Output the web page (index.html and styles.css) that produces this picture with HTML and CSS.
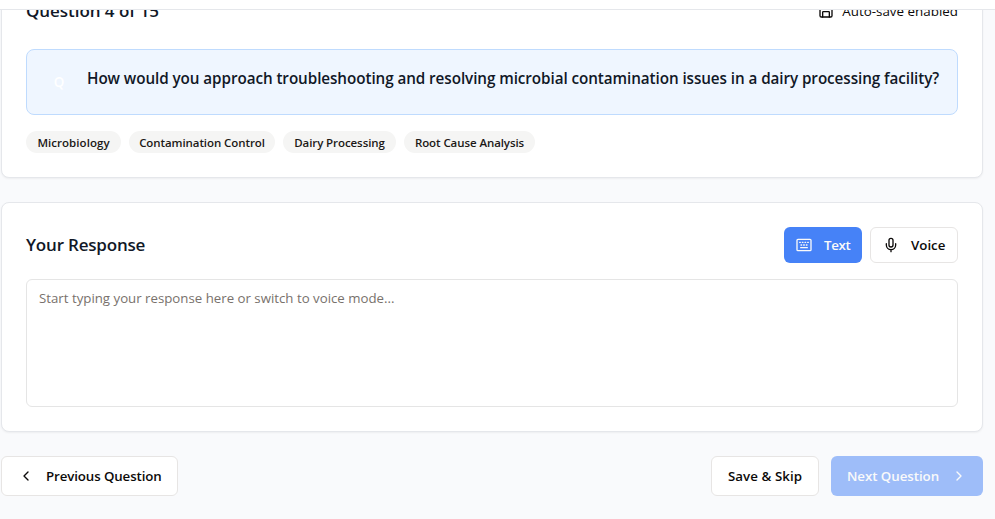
FILE: index.html
```html
<!DOCTYPE html>
<html lang="en">
<head>
<meta charset="utf-8">
<title>Interview Question</title>
<link rel="stylesheet" href="styles.css">
</head>
<body>
<header class="topbar"></header>
<main class="page">
  <section class="card">
    <div class="card-head question-head">
      <h2 class="title title-count">Question 4 of 15</h2>
      <div class="autosave">
        <svg class="icon" viewBox="0 0 24 24"><path d="M15.2 3a2 2 0 0 1 1.4.6l3.8 3.8a2 2 0 0 1 .6 1.4V19a2 2 0 0 1-2 2H5a2 2 0 0 1-2-2V5a2 2 0 0 1 2-2z"/><path d="M17 21v-7a1 1 0 0 0-1-1H8a1 1 0 0 0-1 1v7M7 3v4a1 1 0 0 0 1 1h7"/></svg>
        <span>Auto-save enabled</span>
      </div>
    </div>
    <div class="question">
      <span class="question-mark">Q</span>
      <p class="question-text">How would you approach troubleshooting and resolving microbial contamination issues in a dairy processing facility?</p>
    </div>
    <div class="tags">
      <span class="tag tag-micro">Microbiology</span>
      <span class="tag tag-control">Contamination Control</span>
      <span class="tag tag-dairy">Dairy Processing</span>
      <span class="tag tag-root">Root Cause Analysis</span>
    </div>
  </section>

  <section class="card">
    <div class="card-head response-head">
      <h2 class="title">Your Response</h2>
      <div class="modes">
        <button class="btn btn-small btn-primary btn-text">
          <svg class="icon" viewBox="0 0 24 24"><rect x="1.5" y="3.5" width="21" height="17" rx="1.5"/><path d="M5.5 8h1M9.5 8h1M13.5 8h1M17.5 8h1M7.5 12h1M11.5 12h1M15.5 12h1M7 16h10"/></svg>
          <span>Text</span>
        </button>
        <button class="btn btn-small btn-voice">
          <svg class="icon" viewBox="0 0 24 24"><path d="M12 2a3 3 0 0 0-3 3v7a3 3 0 0 0 6 0V5a3 3 0 0 0-3-3Z"/><path d="M19 10v2a7 7 0 0 1-14 0v-2M12 19v3"/></svg>
          <span>Voice</span>
        </button>
      </div>
    </div>
    <textarea class="answer" placeholder="Start typing your response here or switch to voice mode..."></textarea>
  </section>

  <nav class="actions">
    <button class="btn btn-prev">
      <svg class="icon" viewBox="0 0 24 24"><path d="m15 18-6-6 6-6"/></svg>
      <span>Previous Question</span>
    </button>
    <div class="actions-end">
      <button class="btn btn-skip"><span>Save &amp; Skip</span></button>
      <button class="btn btn-primary btn-next" disabled>
        <span>Next Question</span>
        <svg class="icon" viewBox="0 0 24 24"><path d="m9 18 6-6-6-6"/></svg>
      </button>
    </div>
  </nav>
</main>
</body>
</html>
```
FILE: styles.css
```css
* { box-sizing: border-box; }

body {
  margin: 0;
  height: 519px;
  overflow: hidden;
  background: #f9fafc;
  color: #0c0a09;
  font-family: "Open Sans", "Noto Sans", sans-serif;
  font-size: 13.4px;
  line-height: 20px;
}

.topbar {
  position: relative;
  z-index: 1;
  height: 10px;
  background: #fff;
  border-bottom: 1px solid #e5e7eb;
}

.page {
  width: 982px;
  margin: -38px 0 0 1px;
  display: flex;
  flex-direction: column;
  gap: 24px;
}

.card {
  padding: 24px;
  background: #fff;
  border: 1px solid #e5e7eb;
  border-radius: 8px;
  box-shadow: 0 1px 2px rgba(0, 0, 0, 0.05);
}

.card-head {
  display: flex;
  align-items: center;
  justify-content: space-between;
}

.question-head { height: 28px; margin-bottom: 24px; }
.response-head { height: 36px; margin-bottom: 16px; }

.title {
  margin: 0;
  color: #111827;
  font-size: 17px;
  font-weight: 600;
  letter-spacing: -0.2px;
  line-height: 28px;
}

.title-count { letter-spacing: -0.05px; }

.autosave { display: flex; align-items: center; gap: 8px; }

.icon {
  flex: none;
  width: 16px;
  height: 16px;
  fill: none;
  stroke: currentColor;
  stroke-width: 2;
  stroke-linecap: round;
  stroke-linejoin: round;
}

.question {
  display: flex;
  align-items: flex-start;
  gap: 12px;
  height: 66px;
  padding: 16px;
  background: #eff6ff;
  border: 1px solid #bfdbfe;
  border-radius: 8px;
}

.question-mark {
  flex: none;
  width: 32px;
  line-height: 32px;
  text-align: center;
  color: #fff;
  font-weight: 600;
}

.question-text {
  margin: 0;
  color: #111827;
  font-size: 15.25px;
  font-weight: 600;
  letter-spacing: -0.078px;
  line-height: 24px;
  white-space: nowrap;
}

.tags { display: flex; gap: 8px; margin-top: 16px; }

.tag {
  height: 22px;
  border-radius: 11px;
  background: #f5f5f4;
  color: #1c1917;
  font-size: 11.5px;
  font-weight: 600;
  letter-spacing: -0.08px;
  line-height: 23px;
  text-align: center;
  white-space: nowrap;
}

.tag-micro { width: 95px; letter-spacing: 0.05px; }
.tag-control { width: 146px; }
.tag-dairy { width: 113px; }
.tag-root { width: 131px; }

.modes, .actions-end { display: flex; }
.modes { gap: 8px; }
.actions-end { gap: 12px; }

.btn {
  display: flex;
  align-items: center;
  gap: 12px;
  height: 40px;
  padding: 0 16px;
  border: 1px solid #e7e5e4;
  border-radius: 6px;
  background: #fff;
  color: #0c0a09;
  font: 600 13.3px/20px "Open Sans", "Noto Sans", sans-serif;
  white-space: nowrap;
}

.btn-small { height: 36px; padding: 0 12px; }
.btn-primary { border: 0; background: #4682f7; color: #fafaf9; }
.btn-text { width: 78px; letter-spacing: -0.3px; }
.btn-voice { width: 88px; }
.btn-prev { width: 177px; letter-spacing: -0.11px; }
.btn-skip { width: 108px; letter-spacing: 0.05px; }
.btn-next { width: 152px; opacity: 0.5; letter-spacing: -0.05px; }

.answer {
  display: block;
  width: 100%;
  height: 128px;
  padding: 8px 12px;
  border: 1px solid #e5e5e5;
  border-radius: 6px;
  background: #fff;
  font: 400 13.25px/20px "Open Sans", "Noto Sans", sans-serif;
  resize: none;
}

.answer::placeholder { color: #78716c; }

.actions { display: flex; justify-content: space-between; }
```
